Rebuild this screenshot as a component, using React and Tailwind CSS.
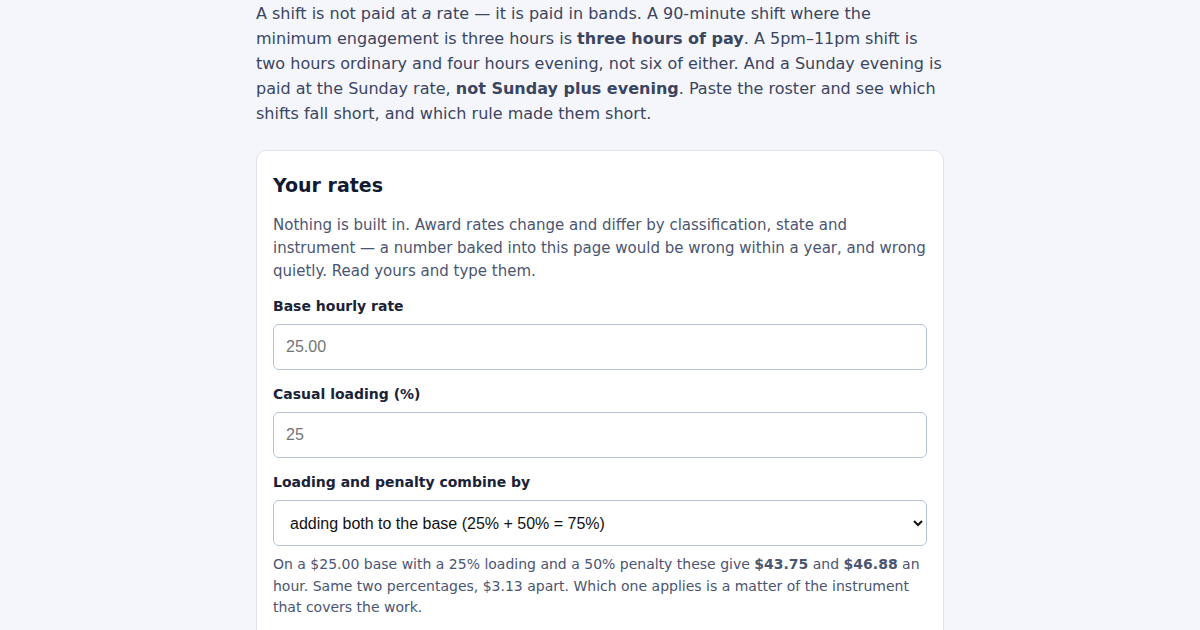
import { useState } from 'react';

const sans = "font-['DejaVu_Sans','Noto_Sans',sans-serif]";
const field = "font-['Liberation_Sans',Arial,sans-serif]";

function Field({ label, id, children }) {
  return (
    <div className="mt-[14px] first:mt-0">
      <label htmlFor={id} className="block text-[14px] leading-5 font-bold text-[#1a2238] mb-2">
        {label}
      </label>
      {children}
    </div>
  );
}

export default function App() {
  const [base, setBase] = useState('');
  const [loading, setLoading] = useState('');
  const [combine, setCombine] = useState('add');

  return (
    <div className={`min-h-screen bg-[#f5f6fb] pt-px ${sans}`}>
      <main className="w-[688px] mx-auto">

        {/* Intro */}
        <p className="text-[16px] leading-[25px] text-[#3a4560]">
          A shift is not paid at <em>a</em> rate — it is paid in bands. A 90-minute shift where the
          minimum engagement is three hours is <strong>three hours of pay</strong>. A 5pm–11pm shift is
          two hours ordinary and four hours evening, not six of either. And a Sunday evening is
          paid at the Sunday rate, <strong>not Sunday plus evening</strong>. Paste the roster and see which
          shifts fall short, and which rule made them short.
        </p>

        {/* Rates card */}
        <section className="mt-6 bg-white border border-[#dfe3ef] rounded-[10px] px-4 pt-5 pb-6">
          <h2 className="text-[19px] leading-7 font-bold text-[#111a33]">Your rates</h2>
          <p className="mt-[15px] text-[15px] leading-[23px] text-[#4a5572]">
            Nothing is built in. Award rates change and differ by classification, state and
            instrument — a number baked into this page would be wrong within a year, and wrong
            quietly. Read yours and type them.
          </p>

          <div className="mt-[13px]">
            <Field label="Base hourly rate" id="base">
              <input
                id="base"
                value={base}
                onChange={e => setBase(e.target.value)}
                placeholder="25.00"
                className={`w-full h-[46px] px-3 border border-[#b9c2dc] rounded-[6px] text-[16px] text-[#111] placeholder:text-[#757575] ${field}`}
              />
            </Field>

            <Field label="Casual loading (%)" id="loading">
              <input
                id="loading"
                value={loading}
                onChange={e => setLoading(e.target.value)}
                placeholder="25"
                className={`w-full h-[46px] px-3 border border-[#b9c2dc] rounded-[6px] text-[16px] text-[#111] placeholder:text-[#757575] ${field}`}
              />
            </Field>

            <Field label="Loading and penalty combine by" id="combine">
              <select
                id="combine"
                value={combine}
                onChange={e => setCombine(e.target.value)}
                className={`w-full h-[46px] px-3 border border-[#b9c2dc] rounded-[6px] bg-white text-[16px] text-[#111] ${field}`}
              >
                <option value="add">adding both to the base (25% + 50% = 75%)</option>
                <option value="compound">compounding (1.25 × 1.50 = 87.5%)</option>
              </select>
            </Field>
          </div>

          <p className="mt-2 text-[14px] leading-[21.5px] text-[#4a5572]">
            On a $25.00 base with a 25% loading and a 50% penalty these give <strong>$43.75</strong> and <strong>$46.88</strong> an
            hour. Same two percentages, $3.13 apart. Which one applies is a matter of the instrument
            that covers the work.
          </p>
        </section>
      </main>
    </div>
  );
}
